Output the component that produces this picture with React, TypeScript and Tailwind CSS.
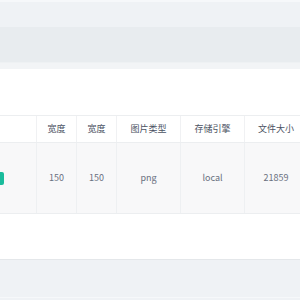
import React from "react";

const cols = [
  { w: 37, h: "", v: "" },
  { w: 40, h: "宽度", v: "150" },
  { w: 40, h: "宽度", v: "150" },
  { w: 64, h: "图片类型", v: "png" },
  { w: 64, h: "存储引擎", v: "local" },
  { w: 63, h: "文件大小", v: "21859" },
];

export default function App() {
  return (
    <div
      className="w-[300px] h-[300px] overflow-hidden bg-white flex flex-col"
      style={{ fontFamily: '"Noto Sans CJK SC", "Liberation Sans", sans-serif' }}
    >
      <div className="h-[2px] bg-[#f6f8fa]" />
      <div className="h-[25px] bg-[#eff2f5]" />
      <div className="h-[36px] bg-[#e8ecef] border-b border-[#eef1f3]" />
      <div className="h-[6px] bg-[#f2f4f6]" />
      <div className="h-[46px] bg-white" />
      <div className="flex flex-col w-[308px]">
        <div className="flex h-[28px] border-t border-b border-[#eceef0] bg-white">
          {cols.map((c, i) => (
            <div
              key={i}
              className="flex items-center justify-center text-[9px] text-[#4b5262] border-r border-[#f0f1f3] shrink-0"
              style={{ width: c.w }}
            >
              {c.h}
            </div>
          ))}
        </div>
        <div className="flex h-[71px] border-b border-[#eceef0] bg-[#f8f8f9]">
          {cols.map((c, i) => (
            <div
              key={i}
              className="flex items-center justify-center text-[9px] text-[#6a7080] border-r border-[#eef0f2] shrink-0"
              style={{ width: c.w }}
            >
              {i === 0 ? (
                <div className="self-center mr-auto w-[4px] h-[13px] bg-[#1abc9c] rounded-r-[2px]" />
              ) : (
                c.v
              )}
            </div>
          ))}
        </div>
      </div>
      <div className="h-[45px] bg-white" />
      <div className="h-[1px] bg-[#e4e7ea]" />
      <div className="h-[37px] bg-[#eff2f5]" />
      <div className="h-[1px] bg-[#f6f8fa]" />
      <div className="flex-1 bg-[#eff2f5]" />
    </div>
  );
}
